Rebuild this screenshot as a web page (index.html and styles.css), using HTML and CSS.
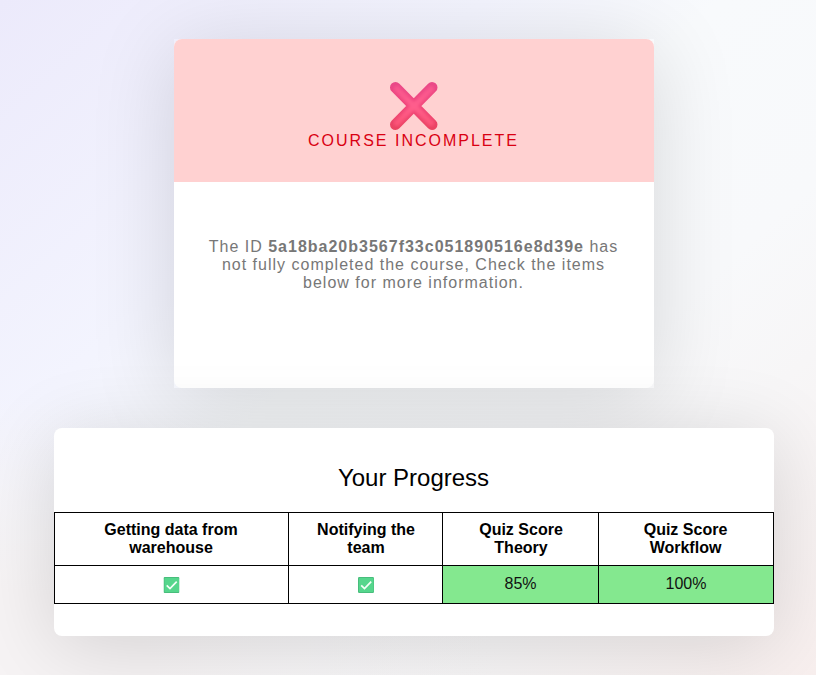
FILE: index.html
```
<!DOCTYPE html>
<html lang="en">
<head>
<meta charset="utf-8">
<title>Course progress</title>
<link rel="stylesheet" href="styles.css">
</head>
<body>
<main class="page">
  <div class="status-shadow">
    <section class="status-card">
      <header class="status-head">
        <svg class="cross" viewBox="0 0 50 50" aria-hidden="true">
          <defs>
            <linearGradient id="cross-fill" x1="0" y1="0" x2="0" y2="50" gradientUnits="userSpaceOnUse">
              <stop offset="0" stop-color="#e9498a"/>
              <stop offset=".5" stop-color="#f0457a"/>
              <stop offset="1" stop-color="#ea4460"/>
            </linearGradient>
            <linearGradient id="cross-core" x1="0" y1="0" x2="0" y2="50" gradientUnits="userSpaceOnUse">
              <stop offset="0" stop-color="#f5528e"/>
              <stop offset=".5" stop-color="#ff5e8c"/>
              <stop offset="1" stop-color="#fa5070"/>
            </linearGradient>
            <filter id="soft"><feGaussianBlur stdDeviation="1.4"/></filter>
          </defs>
          <path d="M6.500 6.500 43 43.500M43 6.500 6.500 43.500" stroke="url(#cross-fill)" stroke-width="11" stroke-linecap="round"/>
          <path d="M8 8 42 42M42 8 8 42" stroke="url(#cross-core)" stroke-width="6" stroke-linecap="round" filter="url(#soft)"/>
        </svg>
        <div class="status-title">COURSE INCOMPLETE</div>
      </header>
      <p class="status-text">The ID <b>5a18ba20b3567f33c051890516e8d39e</b> has not fully completed the course, Check the items below for more information.</p>
    </section>
  </div>
  <section class="progress-card">
    <h1 class="progress-title">Your Progress</h1>
    <table class="progress-table">
      <colgroup><col class="col-data"><col class="col-notify"><col class="col-theory"><col class="col-workflow"></colgroup>
      <tr class="head-row">
        <th>Getting data from<br>warehouse</th>
        <th class="nudged">Notifying the<br>team</th>
        <th class="nudged">Quiz Score<br>Theory</th>
        <th>Quiz Score<br>Workflow</th>
      </tr>
      <tr class="value-row">
        <td><svg class="check" viewBox="0 0 16 16" aria-label="Done"><rect width="16" height="16" rx="1.2" fill="#48bd7c"/><rect x="1" y="1" width="14.500" height="14" rx=".8" fill="#55d68c"/><path d="M3.200 8.300 6.500 11.600 13.200 4.700" fill="none" stroke="#f4fff8" stroke-width="1.700"/></svg></td>
        <td><svg class="check" viewBox="0 0 16 16" aria-label="Done"><rect width="16" height="16" rx="1.2" fill="#48bd7c"/><rect x="1" y="1" width="14.500" height="14" rx=".8" fill="#55d68c"/><path d="M3.200 8.300 6.500 11.600 13.200 4.700" fill="none" stroke="#f4fff8" stroke-width="1.700"/></svg></td>
        <td class="passed">85%</td>
        <td class="passed">100%</td>
      </tr>
    </table>
  </section>
</main>
</body>
</html>
```
FILE: styles.css
```
* { box-sizing: border-box; }
body {
  margin: 0;
  font: 16px/18px "Liberation Sans", Arial, sans-serif;
  color: #000;
}
.page {
  height: 675px;
  padding: 39px 42px 0 54px;
  overflow: hidden;
  display: flex;
  flex-direction: column;
  align-items: center;
  gap: 40px;
  background:
    radial-gradient(ellipse 500px 280px at 0 100%, #f6f3f4 30%, rgba(246, 243, 244, 0) 100%),
    linear-gradient(138deg, #eceafb 0%, #f3f4fe 31%, #f8fafc 46%, #f8f9fb 65%, #f7f6f7 77%, #f8efee 100%);
}
.status-shadow {
  width: 480px;
  height: 349px;
  flex: none;
  box-shadow: 0 10px 80px rgba(0, 0, 0, .14);
}
.status-card {
  height: 100%;
  overflow: hidden;
  border-radius: 8px;
  background: #fff;
  text-align: center;
}
.status-head {
  height: 143px;
  padding-top: 42px;
  background: #ffd1d1;
  color: #d90012;
}
.cross {
  display: block;
  width: 50px;
  height: 50px;
  margin: 0 auto;
  fill: none;
}
.status-title {
  padding: 1px 1px 0 0;
  letter-spacing: 2px;
}
.status-text {
  margin: 0;
  padding: 56px 33px 0 32px;
  color: #777;
  letter-spacing: 1px;
}
.progress-card {
  width: 720px;
  height: 208px;
  flex: none;
  padding-top: 36px;
  border-radius: 8px;
  background: #fff;
  box-shadow: 0 10px 80px rgba(0, 0, 0, .14);
}
.progress-title {
  margin: 0 0 20px;
  padding-right: 1px;
  font-size: 24px;
  line-height: 28px;
  font-weight: 400;
  text-align: center;
}
.progress-table {
  width: 720px;
  table-layout: fixed;
  border-collapse: collapse;
  text-align: center;
}
.progress-table th,
.progress-table td {
  padding: 0 1px 0 0;
  border: 1px solid #000;
}
.progress-table .nudged { padding: 0 0 0 1px; }
.col-data { width: 234px; }
.col-notify { width: 154px; }
.col-theory { width: 156px; }
.col-workflow { width: 175px; }
.head-row { height: 53px; }
.value-row { height: 38px; }
.progress-table .value-row td { padding: 0 0 2px; }
.passed {
  background: #84e88f;
  color: #111;
}
.check {
  display: block;
  width: 16px;
  height: 16px;
  margin: 3px auto 0;
}
.value-row td:first-child .check { transform: translateX(-.5px); }
```
